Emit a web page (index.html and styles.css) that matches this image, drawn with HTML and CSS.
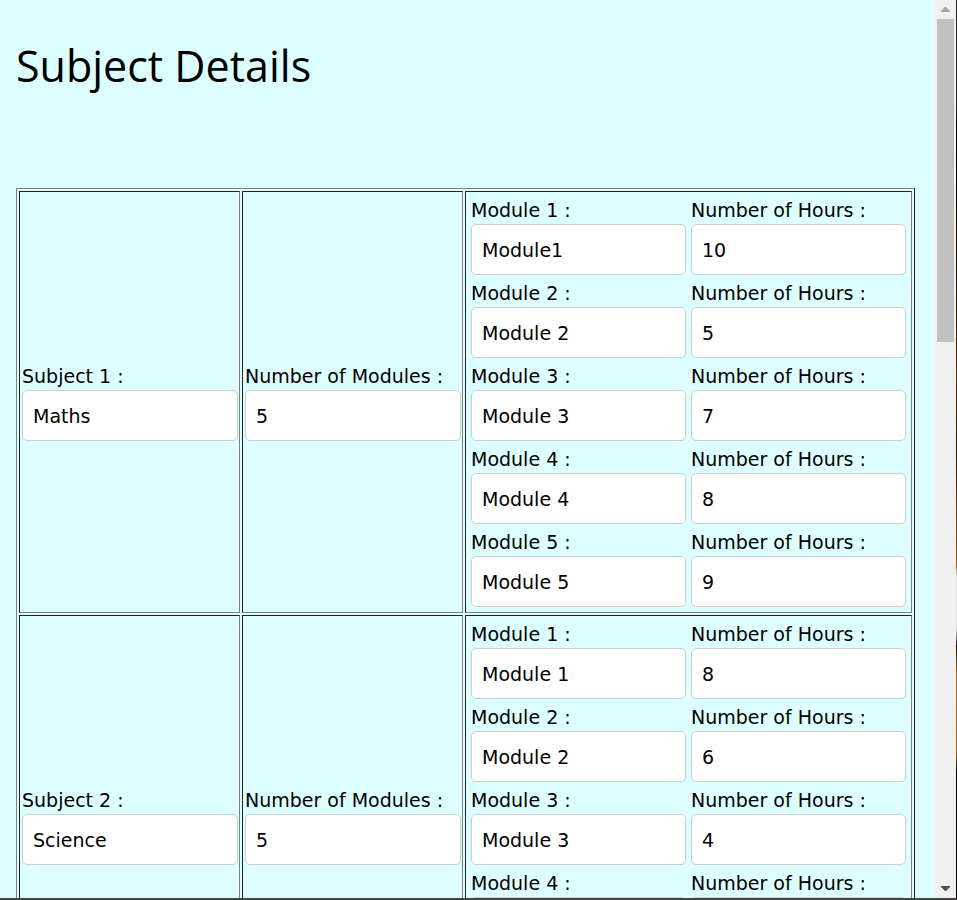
FILE: index.html
```html
<!DOCTYPE html>
<html lang="en">
<head>
<meta charset="utf-8">
<title>Subject Details</title>
<link rel="stylesheet" href="styles.css">
</head>
<body>
<div class="window">
  <main class="page">
    <h1 class="title">Subject Details</h1>
    <table class="subjects">
      <colgroup><col class="col-side"><col class="col-side"><col class="col-modules"></colgroup>
      <tbody>
        <tr>
          <td><label class="field">Subject 1 :<input type="text" value="Maths"></label></td>
          <td><label class="field">Number of Modules :<input type="text" value="5"></label></td>
          <td class="modules-cell">
            <div class="modules">
              <label class="field">Module 1 :<input type="text" value="Module1"></label>
              <label class="field">Number of Hours :<input type="text" value="10"></label>
              <label class="field">Module 2 :<input type="text" value="Module 2"></label>
              <label class="field">Number of Hours :<input type="text" value="5"></label>
              <label class="field">Module 3 :<input type="text" value="Module 3"></label>
              <label class="field">Number of Hours :<input type="text" value="7"></label>
              <label class="field">Module 4 :<input type="text" value="Module 4"></label>
              <label class="field">Number of Hours :<input type="text" value="8"></label>
              <label class="field">Module 5 :<input type="text" value="Module 5"></label>
              <label class="field">Number of Hours :<input type="text" value="9"></label>
            </div>
          </td>
        </tr>
        <tr>
          <td><label class="field">Subject 2 :<input type="text" value="Science"></label></td>
          <td><label class="field">Number of Modules :<input type="text" value="5"></label></td>
          <td class="modules-cell">
            <div class="modules">
              <label class="field">Module 1 :<input type="text" value="Module 1"></label>
              <label class="field">Number of Hours :<input type="text" value="8"></label>
              <label class="field">Module 2 :<input type="text" value="Module 2"></label>
              <label class="field">Number of Hours :<input type="text" value="6"></label>
              <label class="field">Module 3 :<input type="text" value="Module 3"></label>
              <label class="field">Number of Hours :<input type="text" value="4"></label>
              <label class="field">Module 4 :<input type="text"></label>
              <label class="field">Number of Hours :<input type="text"></label>
              <label class="field">Module 5 :<input type="text"></label>
              <label class="field">Number of Hours :<input type="text"></label>
            </div>
          </td>
        </tr>
      </tbody>
    </table>
  </main>
  <div class="scrollbar" aria-hidden="true">
    <svg class="arrow arrow-up" viewBox="0 0 9 5"><path d="M0 5V4L4 0H5L9 4V5Z"/></svg>
    <div class="track"><div class="thumb"></div><div class="rest"></div></div>
    <svg class="arrow arrow-down" viewBox="0 0 9 5"><path d="M0 0V1L4 5H5L9 1V0Z"/></svg>
  </div>
  <div class="edge"></div>
</div>
</body>
</html>
```
FILE: styles.css
```css
* {
  box-sizing: border-box;
}

body {
  margin: 0;
  color: #000;
  font-family: Verdana, "DejaVu Sans", sans-serif;
  font-size: 19px;
}

.window {
  display: flex;
  height: 100vh;
  overflow: hidden;
  border-bottom: 2px solid #474345;
  background: #dff;
}

.page {
  flex: 1;
  min-width: 0;
  overflow: hidden;
  padding: 32px 20px 0 16px;
}

.title {
  margin: 0 0 88px;
  font-family: "Segoe UI", "Open Sans", sans-serif;
  font-size: 43px;
  font-weight: 400;
  line-height: 68px;
}

.subjects {
  width: 100%;
  table-layout: fixed;
  border: 1px solid;
  border-color: #808080 #222 #222 #808080;
  border-spacing: 2px;
}

.col-side {
  width: 221px;
}

.col-modules {
  width: 447px;
}

.subjects td {
  padding: 1px 1px 1px 2px;
  border: 1px solid;
  border-color: #222 #808080 #808080 #222;
  vertical-align: middle;
}

.subjects .modules-cell {
  padding: 1px;
}

.modules {
  display: grid;
  grid-template-columns: 1fr 1fr;
  gap: 5px;
  padding: 4px;
}

.field {
  display: block;
  min-width: 0;
  line-height: 27px;
  white-space: nowrap;
}

.field input {
  display: block;
  width: 100%;
  height: 51px;
  margin: 0;
  padding: 0 10px;
  border: 1px solid #ccc;
  border-radius: 5px;
  background: #fff;
  color: inherit;
  font: inherit;
}

.scrollbar {
  display: flex;
  flex-direction: column;
  align-items: center;
  width: 21px;
  background: #f0f0f0;
}

.arrow {
  width: 9px;
  height: 5px;
  margin: 7px 0;
}

.arrow-up {
  fill: #a3a3a3;
}

.arrow-down {
  fill: #505050;
}

.track {
  display: flex;
  flex: 1;
  flex-direction: column;
  width: 17px;
}

.thumb {
  flex: 3;
  background: #c1c1c1;
}

.rest {
  flex: 5;
}

.edge {
  width: 1px;
  background: linear-gradient(#26282c 0, #26282c 12%, #000 14%, #100800 28%, #5a3008 42%, #2a1404 50%, #a35c10 63%, #ddd 64%, #ddd 70%, #100505 72%, #b96b14 75%, #a86014 84%, #000 86%);
}
```
